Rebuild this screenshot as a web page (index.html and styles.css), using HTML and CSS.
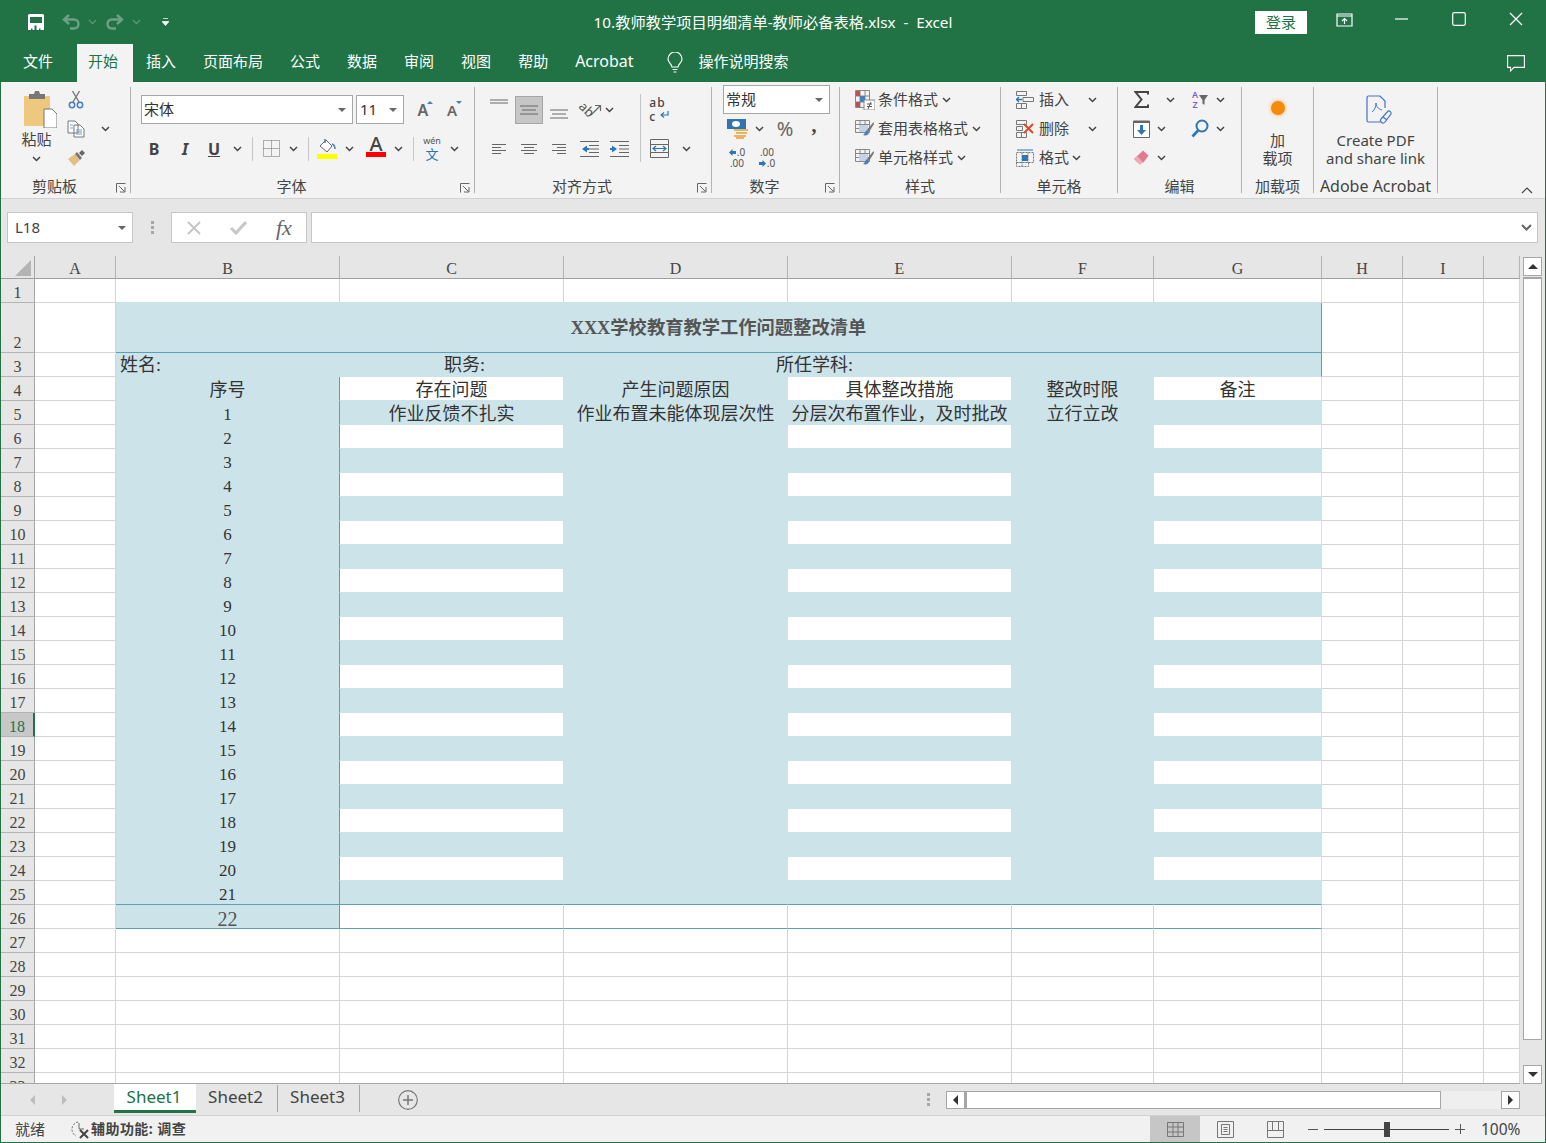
FILE: index.html
```html
<!DOCTYPE html>
<html lang="zh-CN">
<head>
  <meta charset="UTF-8">
  <title>10.教师教学项目明细清单-教师必备表格.xlsx - Excel</title>
  <link rel="stylesheet" href="styles.css">
</head>
<body>
<svg class="defs" width="0" height="0">
  <symbol id="chev" viewBox="0 0 9 6"><path d="M1 1l3.5 3.5L8 1" fill="none" stroke="#444" stroke-width="1.5"/></symbol>
  <symbol id="launch" viewBox="0 0 10 10"><path d="M.5 9.5V.5h9M3 3l5.5 5.5M4 9h5V4" fill="none" stroke="#666"/></symbol>
  <symbol id="a-top" viewBox="0 0 18 10"><path d="M0 1h18M0 4h18" stroke="#666"/></symbol>
  <symbol id="a-mid" viewBox="0 0 18 12"><path d="M0 2h18M2 6h14M0 10h18" stroke="#666"/></symbol>
  <symbol id="a-left" viewBox="0 0 16 12"><path d="M1 1.500h14M1 4.500h9M1 7.500h14M1 10.500h9" stroke="#666"/></symbol>
  <symbol id="a-center" viewBox="0 0 16 12"><path d="M0 1.500h16M3 4.500h10M0 7.500h16M3 10.500h10" stroke="#666"/></symbol>
  <symbol id="a-right" viewBox="0 0 16 12"><path d="M1 1.500h14M6 4.500h9M1 7.500h14M6 10.500h9" stroke="#666"/></symbol>
  <symbol id="brush" viewBox="0 0 20 20"><path d="M.5 1.500h14v12H.5zM.5 5.500h14M.5 9.500h14M5 1.500v12M10 1.500v12" fill="none" stroke="#888"/><path d="M4 6h9v7H4z" fill="#c4d3e6"/><path d="M18.500 3L12 11l2 2 5-8z" fill="#777"/><path d="M12 11c-2 1-1 3-4 5 3 1 6 0 6-3z" fill="#4a7ebb"/></symbol>
</svg>

<div class="app">
  <header class="titlebar">
    <div class="qat">
      <svg class="save" width="16" height="16" viewBox="0 0 16 16"><path d="M0 1.500A1.500 1.500 0 0 1 1.500 0h13A1.500 1.500 0 0 1 16 1.500V16H0z" fill="#fff"/><path d="M2 3h12v6H2z" fill="#217346"/><path d="M6.500 11.500h2V16h-2z" fill="#217346"/><path d="M3 14.500h1.500V16H3zM11 14.500h1.500V16H11z" fill="#217346"/></svg>
      <svg class="undo" width="18" height="16" viewBox="0 0 18 16"><path d="M7 1L2 5.500 7 10M2 5.500h10c6 0 6 9 0 9H8" fill="none" stroke="#6f9f85" stroke-width="2.400"/></svg>
      <svg class="qchev" width="9" height="6" viewBox="0 0 9 6"><path d="M1 1l3.500 3.500L8 1" fill="none" stroke="#5f9479" stroke-width="1.300"/></svg>
      <svg class="redo" width="18" height="16" viewBox="0 0 18 16"><path d="M11 1l5 4.500-5 4.500M16 5.500H6c-6 0-6 9 0 9h4" fill="none" stroke="#6f9f85" stroke-width="2.400"/></svg>
      <svg class="qchev" width="9" height="6" viewBox="0 0 9 6"><path d="M1 1l3.500 3.500L8 1" fill="none" stroke="#5f9479" stroke-width="1.300"/></svg>
      <svg class="custom" width="7" height="8" viewBox="0 0 7 8"><path d="M1 .5h5M0 3.500h7L3.500 7.500z" fill="#fff" stroke="#fff" stroke-width=".7"/></svg>
    </div>
    <div class="doc-title">10.教师教学项目明细清单-教师必备表格.xlsx&nbsp; -&nbsp; Excel</div>
    <div class="win-ctrl">
      <span class="login">登录</span>
      <svg class="display" width="17" height="14" viewBox="0 0 17 14"><path d="M1 1h15v12H1zM1 3h15" fill="none" stroke="#fff" stroke-width="1.200"/><path d="M8.500 11V6M6 8l2.500-2.500L11 8" fill="none" stroke="#fff" stroke-width="1.200"/></svg>
      <svg class="min" width="13" height="2" viewBox="0 0 13 2"><path d="M0 1h13" stroke="#fff" stroke-width="1.200"/></svg>
      <svg class="max" width="14" height="14" viewBox="0 0 14 14"><rect x=".7" y=".7" width="12.600" height="12.600" rx="1.500" fill="none" stroke="#fff" stroke-width="1.200"/></svg>
      <svg class="close" width="14" height="14" viewBox="0 0 14 14"><path d="M1 1l12 12M13 1L1 13" stroke="#fff" stroke-width="1.300"/></svg>
    </div>
  </header>

  <nav class="tabs">
    <span class="tab tab-file">文件</span>
    <span class="tab active">开始</span>
    <span class="tab">插入</span>
    <span class="tab">页面布局</span>
    <span class="tab">公式</span>
    <span class="tab">数据</span>
    <span class="tab">审阅</span>
    <span class="tab">视图</span>
    <span class="tab">帮助</span>
    <span class="tab tab-acro">Acrobat</span>
    <svg class="bulb" width="16" height="22" viewBox="0 0 16 22"><path d="M5 15c0-3-4-4-4-8a7 7 0 0 1 14 0c0 4-4 5-4 8zM5.500 17.500h5M6.500 20h3" fill="none" stroke="#fff" stroke-width="1.200"/></svg>
    <span class="search-text">操作说明搜索</span>
    <svg class="comment" width="18" height="17" viewBox="0 0 18 17"><path d="M.6.600h16.800v11.800H7l-3.500 3.500v-3.500H.6z" fill="none" stroke="#fff" stroke-width="1.100"/></svg>
  </nav>

  <section class="ribbon">
    <div class="group g-clip">
      <div class="body clip-body">
        <div class="paste">
          <svg class="paste-ic" width="34" height="37" viewBox="0 0 34 37"><path d="M1 5h26v30H1z" fill="#edc87e"/><path d="M6 3h5l1-3h4l1 3h5v5H6z" fill="#777"/><path d="M21 18h8l5 5v14H21z" fill="#fff" stroke="#777"/></svg>
          <span class="big-label">粘贴</span>
          <svg width="9" height="6"><use href="#chev"/></svg>
        </div>
        <div class="clip-tools">
          <div class="row">
            <span class="b w28"><svg width="16" height="19" viewBox="0 0 16 19"><path d="M11.500 1L5 12M4.500 1L11 12" stroke="#777" stroke-width="1.400"/><circle cx="4" cy="15" r="2.700" fill="none" stroke="#4a7ebb" stroke-width="1.500"/><circle cx="12" cy="15" r="2.700" fill="none" stroke="#4a7ebb" stroke-width="1.500"/></svg></span>
          </div>
          <div class="row">
            <span class="b w28"><svg width="18" height="18" viewBox="0 0 18 18"><path d="M1 1h7l3 3v9H1zM7 5h6l4 4v8H7z" fill="#fff" stroke="#777"/><path d="M9 10h6M9 12h6M9 14h6M3 5h3M3 8h3" stroke="#7a9cc6"/></svg></span>
            <span class="b w30"><svg width="9" height="6"><use href="#chev"/></svg></span>
          </div>
          <div class="row">
            <span class="b w28"><svg width="18" height="16" viewBox="0 0 18 16"><path d="M1 9l7-5 5 6-6 6z" fill="#e3bf85"/><path d="M8 4l5 6 2-2-5-6z" fill="#777"/><path d="M12 3l3-3 3 3-3 3z" fill="#666"/></svg></span>
          </div>
        </div>
      </div>
      <div class="label has-launch">剪贴板<svg class="launch" width="10" height="10"><use href="#launch"/></svg></div>
    </div>

    <div class="group g-font">
      <div class="body two-rows">
        <div class="row">
          <span class="select font-name"><span>宋体</span><i class="tri"></i></span>
          <span class="select font-size"><span>11</span><i class="tri"></i></span>
          <span class="b w38"><span class="grow">A<i class="up"></i></span></span>
          <span class="b w20"><span class="grow shrink">A<i class="up down"></i></span></span>
        </div>
        <div class="row">
          <span class="b w28 fb">B</span>
          <span class="b w34 fi">I</span>
          <span class="b w24 fu">U</span>
          <span class="b w22"><svg width="9" height="6"><use href="#chev"/></svg></span>
          <span class="b w8"><i class="vsep"></i></span>
          <span class="b w30"><svg width="17" height="17" viewBox="0 0 17 17"><path d="M.5.500h16v16H.5zM8.500.500v16M.5 8.500h16" fill="none" stroke="#666" stroke-dasharray="1 1"/></svg></span>
          <span class="b w14"><svg width="9" height="6"><use href="#chev"/></svg></span>
          <span class="b w16"><i class="vsep"></i></span>
          <span class="b w22"><svg width="20" height="21" viewBox="0 0 20 21"><path d="M3 8l6-6 6 6-5 6z" fill="#fff" stroke="#666"/><path d="M8 5V1M15 6c3 1 3 3 3 5" fill="none" stroke="#4a7ebb" stroke-width="1.500"/><path d="M0 16h20v5H0z" fill="#ffff00"/></svg></span>
          <span class="b w22"><svg width="9" height="6"><use href="#chev"/></svg></span>
          <span class="b w32 font-color">A</span>
          <span class="b w12"><svg width="9" height="6"><use href="#chev"/></svg></span>
          <span class="b w18"><i class="vsep"></i></span>
          <span class="b w20 wen"><small>wén</small><em>文</em></span>
          <span class="b w24"><svg width="9" height="6"><use href="#chev"/></svg></span>
        </div>
      </div>
      <div class="label has-launch">字体<svg class="launch" width="10" height="10"><use href="#launch"/></svg></div>
    </div>

    <div class="group g-align">
      <div class="body align-body">
        <div class="two-rows align-left">
          <div class="row">
            <span class="b w30"><svg class="up-6" width="18" height="10"><use href="#a-top"/></svg></span>
            <span class="b w30"><span class="pressed"><svg width="18" height="12"><use href="#a-mid"/></svg></span></span>
            <span class="b w30"><svg class="down-4" width="18" height="12"><use href="#a-mid"/></svg></span>
            <span class="b w30 orient-box"><span class="orient">ab</span><svg width="12" height="12" viewBox="0 0 12 12"><path d="M1 11L10 2M5 1.500h5.500V7" fill="none" stroke="#666" stroke-width="1.200"/></svg></span>
            <span class="b w10"><svg width="9" height="6"><use href="#chev"/></svg></span>
          </div>
          <div class="row">
            <span class="b w30"><svg width="16" height="12"><use href="#a-left"/></svg></span>
            <span class="b w30"><svg width="16" height="12"><use href="#a-center"/></svg></span>
            <span class="b w30"><svg width="16" height="12"><use href="#a-right"/></svg></span>
            <span class="b w30"><svg width="19" height="16" viewBox="0 0 19 16"><path d="M0 .5h19M9 4.500h10M9 8h10M9 11.500h10M0 15.500h19" stroke="#666"/><path d="M7 4.500L2 8l5 3.500zM7 7h-0" fill="#2f75b5"/><path d="M5 7h4v2H5z" fill="#2f75b5"/></svg></span>
            <span class="b w30"><svg width="19" height="16" viewBox="0 0 19 16"><path d="M0 .5h19M9 4.500h10M9 8h10M9 11.500h10M0 15.500h19" stroke="#666"/><path d="M2 4.500L7 8l-5 3.500z" fill="#2f75b5"/><path d="M0 7h3v2H0z" fill="#2f75b5"/></svg></span>
          </div>
        </div>
        <i class="vsep tall"></i>
        <div class="two-rows align-right">
          <div class="row">
            <span class="b w36 wrap-ic"><span>ab<br>c</span><svg width="9" height="8" viewBox="0 0 9 8"><path d="M8 0v4H2M4 1.500L1 4l3 2.500" fill="none" stroke="#2f75b5" stroke-width="1.200"/></svg></span>
          </div>
          <div class="row">
            <span class="b w36"><svg width="19" height="19" viewBox="0 0 19 19"><path d="M.5.500h18v18H.5zM.5 5.500h18M.5 13.500h18" fill="none" stroke="#666"/><path d="M3 9.500h13M6 7L3 9.500 6 12M13 7l3 2.500L13 12" fill="none" stroke="#2f75b5" stroke-width="1.200"/></svg></span>
            <span class="b w18"><svg width="9" height="6"><use href="#chev"/></svg></span>
          </div>
        </div>
      </div>
      <div class="label has-launch">对齐方式<svg class="launch" width="10" height="10"><use href="#launch"/></svg></div>
    </div>

    <div class="group g-num">
      <div class="body">
        <div class="row"><span class="select num-format"><span>常规</span><i class="tri"></i></span></div>
        <div class="row">
          <span class="b w30"><svg width="21" height="20" viewBox="0 0 21 20"><path d="M0 0h19v10H0z" fill="#2f75b5"/><ellipse cx="9" cy="5" rx="4" ry="3" fill="#fff"/><path d="M7 10h14v2H7zM9 13h11v2H9zM7 16h12v2H7zM9 18h8v2H9z" fill="#eab560"/></svg></span>
          <span class="b w14"><svg width="9" height="6"><use href="#chev"/></svg></span>
          <span class="b w38 percent">%</span>
          <span class="b w20 comma">,</span>
        </div>
        <div class="row">
          <span class="b w30 dec"><span><svg width="7" height="7" viewBox="0 0 7 7"><path d="M3.500 0L0 3.500 3.500 7V5H7V2H3.500z" fill="#2f75b5"/></svg>.0<br>.00</span></span>
          <span class="b w30 dec"><span>.00<br><svg width="7" height="7" viewBox="0 0 7 7"><path d="M3.500 0L7 3.500 3.500 7V5H0V2h3.500z" fill="#2f75b5"/></svg>.0</span></span>
        </div>
      </div>
      <div class="label has-launch">数字<svg class="launch" width="10" height="10"><use href="#launch"/></svg></div>
    </div>

    <div class="group g-styles">
      <div class="body">
        <div class="row item">
          <svg width="20" height="20" viewBox="0 0 20 20"><path d="M.5.500h14v17H.5zM.5 6h14M.5 12h14M5 .5v17M10 .5v17" fill="none" stroke="#888"/><path d="M1 1h4v5H1z" fill="#c0504d"/><path d="M5 6h5v6H5z" fill="#4a7ebb"/><path d="M1 12h4v5H1z" fill="#c0504d"/><path d="M9 10h11v10H9z" fill="#fff" stroke="#888"/><path d="M12 14h5M12 16.500h5M16 12l-3 7" stroke="#555"/></svg>
          <span class="item-text">条件格式</span><svg class="after" width="9" height="6"><use href="#chev"/></svg>
        </div>
        <div class="row item">
          <svg width="20" height="20"><use href="#brush"/></svg>
          <span class="item-text">套用表格格式</span><svg class="after" width="9" height="6"><use href="#chev"/></svg>
        </div>
        <div class="row item">
          <svg width="20" height="20"><use href="#brush"/></svg>
          <span class="item-text">单元格样式</span><svg class="after" width="9" height="6"><use href="#chev"/></svg>
        </div>
      </div>
      <div class="label">样式</div>
    </div>

    <div class="group g-cells">
      <div class="body">
        <div class="row item">
          <svg width="18" height="18" viewBox="0 0 18 18"><path d="M.5.500h10v4H.5zM.5 12.500h10v5H.5zM5.500 12.500v5M7 6.500h10.500v4H7z" fill="none" stroke="#777"/><path d="M6 8.500H1M3 6L.5 8.500 3 11" fill="none" stroke="#2f75b5" stroke-width="1.300"/></svg>
          <span class="item-text">插入</span><svg class="after wide" width="9" height="6"><use href="#chev"/></svg>
        </div>
        <div class="row item">
          <svg width="18" height="18" viewBox="0 0 18 18"><path d="M.5.500h10v4H.5zM.5 12.500h10v5H.5zM5.500 12.500v5M.5 6.500h6v4H.5z" fill="none" stroke="#777"/><path d="M8 4l9 9M17 4l-9 9" stroke="#d9482b" stroke-width="2"/></svg>
          <span class="item-text">删除</span><svg class="after wide" width="9" height="6"><use href="#chev"/></svg>
        </div>
        <div class="row item">
          <svg width="18" height="18" viewBox="0 0 18 18"><path d="M.5 3.500h17v10H.5zM.5 13.500h12v4H.5zM6 3.500v14M12 3.500v10" fill="none" stroke="#777" stroke-dasharray="2 1"/><path d="M6 6h6v6H6z" fill="#2f75b5"/><path d="M1 1h16" stroke="#2f75b5"/></svg>
          <span class="item-text">格式</span><svg class="after" width="9" height="6"><use href="#chev"/></svg>
        </div>
      </div>
      <div class="label">单元格</div>
    </div>

    <div class="group g-edit">
      <div class="body">
        <div class="row">
          <span class="b w30"><svg width="15" height="17" viewBox="0 0 15 17"><path d="M14 3.500V1H1.500l6 7.500-6 7.500H14v-2.500" fill="none" stroke="#444" stroke-width="2"/></svg></span>
          <span class="b w28"><svg width="9" height="6"><use href="#chev"/></svg></span>
          <span class="b w32 sort"><span>A<br>Z</span><svg width="9" height="10" viewBox="0 0 9 10"><path d="M0 0h9L5.500 5v5l-2-1.500V5z" fill="#666"/></svg></span>
          <span class="b w8"><svg width="9" height="6"><use href="#chev"/></svg></span>
        </div>
        <div class="row">
          <span class="b w30"><svg width="17" height="18" viewBox="0 0 17 18"><path d="M.5 1h16v16.500H.5z" fill="#fff" stroke="#666"/><path d="M.5 1h16v2H.5z" fill="#666"/><path d="M7 5h3v5h3l-4.500 5L4 10h3z" fill="#2f75b5"/></svg></span>
          <span class="b w10"><svg width="9" height="6"><use href="#chev"/></svg></span>
          <span class="b w18"></span>
          <span class="b w32"><svg width="18" height="19" viewBox="0 0 18 19"><circle cx="11" cy="7" r="5.500" fill="none" stroke="#2f75b5" stroke-width="2"/><path d="M7 11.500L1.500 17.500" stroke="#2f75b5" stroke-width="2.600"/></svg></span>
          <span class="b w8"><svg width="9" height="6"><use href="#chev"/></svg></span>
        </div>
        <div class="row">
          <span class="b w30"><svg width="16" height="16" viewBox="0 0 16 16"><path d="M10 .5l5.500 5-5 7-6 0L1 9z" fill="#e2798d"/><path d="M1 9l6 6 3-3-6-6z" fill="#eeaab7"/></svg></span>
          <span class="b w10"><svg width="9" height="6"><use href="#chev"/></svg></span>
        </div>
      </div>
      <div class="label">编辑</div>
    </div>

    <div class="group g-addin">
      <div class="body stack">
        <span class="stack-ic"><i class="dot"></i></span>
        <span>加</span>
        <span>载项</span>
      </div>
      <div class="label">加载项</div>
    </div>

    <div class="group g-acro">
      <div class="body stack">
        <span class="stack-ic"><svg width="26" height="30" viewBox="0 0 26 30"><path d="M14 27H2.500A1.500 1.500 0 0 1 1 25.500v-23A1.500 1.500 0 0 1 2.500 1H14l5 5v7" fill="none" stroke="#4472c4" stroke-width="1.200"/><path d="M6 17c3-2 4-6 4-9 0 3 2 6 6 7" fill="none" stroke="#4472c4"/><path d="M15 24l7-8a2.500 2.500 0 0 1 3 3l-6 8a2.500 2.500 0 0 1-4-3zM17 22l4 3" fill="none" stroke="#4472c4" stroke-width="1.200"/></svg></span>
        <span>Create PDF</span>
        <span>and share link</span>
      </div>
      <div class="label acro-label">Adobe Acrobat</div>
    </div>

    <svg class="collapse" width="12" height="7" viewBox="0 0 12 7"><path d="M1 6l5-5 5 5" fill="none" stroke="#444" stroke-width="1.200"/></svg>
  </section>

  <section class="formula">
    <div class="name-box"><span>L18</span><i class="tri"></i></div>
    <div class="grip"><i></i><i></i><i></i></div>
    <div class="fx-box">
      <svg width="14" height="14" viewBox="0 0 14 14"><path d="M1 1l12 12M13 1L1 13" stroke="#c6c6c6" stroke-width="2"/></svg>
      <svg width="17" height="14" viewBox="0 0 17 14"><path d="M1 7l5 5L16 1" fill="none" stroke="#c6c6c6" stroke-width="3"/></svg>
      <span class="fx">fx</span>
    </div>
    <div class="formula-input"><svg width="11" height="7" viewBox="0 0 11 7"><path d="M1 1l4.500 4.500L10 1" fill="none" stroke="#666" stroke-width="2"/></svg></div>
  </section>

  <section class="sheet-area">
    <div class="grid-wrap">
      <table class="grid">
        <colgroup><col class="c-head"><col class="c-a"><col class="c-wide"><col class="c-wide"><col class="c-wide"><col class="c-wide"><col class="c-f"><col class="c-g"><col class="c-a"><col class="c-a"><col class="c-j"></colgroup>
        <tr class="letters"><th class="corner"><svg width="16" height="16" viewBox="0 0 16 16"><path d="M16 0v16H0z" fill="#b4b4b4"/></svg></th><th>A</th><th>B</th><th>C</th><th>D</th><th>E</th><th>F</th><th>G</th><th>H</th><th>I</th><th></th></tr>
        <tr class="r1"><th>1</th><td></td><td></td><td></td><td></td><td></td><td></td><td></td><td></td><td></td><td></td></tr>
        <tr class="r2"><th>2</th><td></td><td colspan="6" class="blue sheet-title">XXX学校教育教学工作问题整改清单</td><td></td><td></td><td></td></tr>
        <tr class="r3"><th>3</th><td></td><td colspan="6" class="blue info"><span class="info-name">姓名:</span><span class="info-job">职务:</span><span>所任学科:</span></td><td></td><td></td><td></td></tr>
        <tr class="r4"><th>4</th><td></td><td class="blue edge">序号</td><td class="band">存在问题</td><td class="blue">产生问题原因</td><td class="band">具体整改措施</td><td class="blue">整改时限</td><td class="band">备注</td><td></td><td></td><td></td></tr>
        <tr><th>5</th><td></td><td class="blue edge">1</td><td class="blue">作业反馈不扎实</td><td class="blue">作业布置未能体现层次性</td><td class="blue">分层次布置作业&#xFF0C;及时批改</td><td class="blue">立行立改</td><td class="blue"></td><td></td><td></td><td></td></tr>
        <tr><th>6</th><td></td><td class="blue edge">2</td><td class="band"></td><td class="blue"></td><td class="band"></td><td class="blue"></td><td class="band"></td><td></td><td></td><td></td></tr>
        <tr><th>7</th><td></td><td class="blue edge">3</td><td class="blue"></td><td class="blue"></td><td class="blue"></td><td class="blue"></td><td class="blue"></td><td></td><td></td><td></td></tr>
        <tr><th>8</th><td></td><td class="blue edge">4</td><td class="band"></td><td class="blue"></td><td class="band"></td><td class="blue"></td><td class="band"></td><td></td><td></td><td></td></tr>
        <tr><th>9</th><td></td><td class="blue edge">5</td><td class="blue"></td><td class="blue"></td><td class="blue"></td><td class="blue"></td><td class="blue"></td><td></td><td></td><td></td></tr>
        <tr><th>10</th><td></td><td class="blue edge">6</td><td class="band"></td><td class="blue"></td><td class="band"></td><td class="blue"></td><td class="band"></td><td></td><td></td><td></td></tr>
        <tr><th>11</th><td></td><td class="blue edge">7</td><td class="blue"></td><td class="blue"></td><td class="blue"></td><td class="blue"></td><td class="blue"></td><td></td><td></td><td></td></tr>
        <tr><th>12</th><td></td><td class="blue edge">8</td><td class="band"></td><td class="blue"></td><td class="band"></td><td class="blue"></td><td class="band"></td><td></td><td></td><td></td></tr>
        <tr><th>13</th><td></td><td class="blue edge">9</td><td class="blue"></td><td class="blue"></td><td class="blue"></td><td class="blue"></td><td class="blue"></td><td></td><td></td><td></td></tr>
        <tr><th>14</th><td></td><td class="blue edge">10</td><td class="band"></td><td class="blue"></td><td class="band"></td><td class="blue"></td><td class="band"></td><td></td><td></td><td></td></tr>
        <tr><th>15</th><td></td><td class="blue edge">11</td><td class="blue"></td><td class="blue"></td><td class="blue"></td><td class="blue"></td><td class="blue"></td><td></td><td></td><td></td></tr>
        <tr><th>16</th><td></td><td class="blue edge">12</td><td class="band"></td><td class="blue"></td><td class="band"></td><td class="blue"></td><td class="band"></td><td></td><td></td><td></td></tr>
        <tr><th>17</th><td></td><td class="blue edge">13</td><td class="blue"></td><td class="blue"></td><td class="blue"></td><td class="blue"></td><td class="blue"></td><td></td><td></td><td></td></tr>
        <tr><th class="sel">18</th><td></td><td class="blue edge">14</td><td class="band"></td><td class="blue"></td><td class="band"></td><td class="blue"></td><td class="band"></td><td></td><td></td><td></td></tr>
        <tr><th>19</th><td></td><td class="blue edge">15</td><td class="blue"></td><td class="blue"></td><td class="blue"></td><td class="blue"></td><td class="blue"></td><td></td><td></td><td></td></tr>
        <tr><th>20</th><td></td><td class="blue edge">16</td><td class="band"></td><td class="blue"></td><td class="band"></td><td class="blue"></td><td class="band"></td><td></td><td></td><td></td></tr>
        <tr><th>21</th><td></td><td class="blue edge">17</td><td class="blue"></td><td class="blue"></td><td class="blue"></td><td class="blue"></td><td class="blue"></td><td></td><td></td><td></td></tr>
        <tr><th>22</th><td></td><td class="blue edge">18</td><td class="band"></td><td class="blue"></td><td class="band"></td><td class="blue"></td><td class="band"></td><td></td><td></td><td></td></tr>
        <tr><th>23</th><td></td><td class="blue edge">19</td><td class="blue"></td><td class="blue"></td><td class="blue"></td><td class="blue"></td><td class="blue"></td><td></td><td></td><td></td></tr>
        <tr><th>24</th><td></td><td class="blue edge">20</td><td class="band"></td><td class="blue"></td><td class="band"></td><td class="blue"></td><td class="band"></td><td></td><td></td><td></td></tr>
        <tr class="line"><th>25</th><td></td><td class="blue edge">21</td><td class="blue"></td><td class="blue"></td><td class="blue"></td><td class="blue"></td><td class="blue"></td><td></td><td></td><td></td></tr>
        <tr class="line"><th>26</th><td></td><td class="blue edge large">22</td><td></td><td></td><td></td><td></td><td></td><td></td><td></td><td></td></tr>
        <tr><th>27</th><td></td><td></td><td></td><td></td><td></td><td></td><td></td><td></td><td></td><td></td></tr>
        <tr><th>28</th><td></td><td></td><td></td><td></td><td></td><td></td><td></td><td></td><td></td><td></td></tr>
        <tr><th>29</th><td></td><td></td><td></td><td></td><td></td><td></td><td></td><td></td><td></td><td></td></tr>
        <tr><th>30</th><td></td><td></td><td></td><td></td><td></td><td></td><td></td><td></td><td></td><td></td></tr>
        <tr><th>31</th><td></td><td></td><td></td><td></td><td></td><td></td><td></td><td></td><td></td><td></td></tr>
        <tr><th>32</th><td></td><td></td><td></td><td></td><td></td><td></td><td></td><td></td><td></td><td></td></tr>
        <tr><th>33</th><td></td><td></td><td></td><td></td><td></td><td></td><td></td><td></td><td></td><td></td></tr>
      </table>
    </div>
    <div class="vscroll">
      <span class="sb-btn"><i class="arr-up"></i></span>
      <span class="sb-thumb"></span>
      <span class="sb-btn sb-down"><i class="arr-down"></i></span>
    </div>
  </section>

  <section class="sheetbar">
    <div class="sheet-nav"><i class="nav-l"></i><i class="nav-r"></i></div>
    <span class="sheet-tab on">Sheet1</span>
    <span class="sheet-tab">Sheet2</span>
    <span class="sheet-tab">Sheet3</span>
    <svg class="add-sheet" width="20" height="20" viewBox="0 0 20 20"><circle cx="10" cy="10" r="9.300" fill="none" stroke="#777" stroke-width="1.200"/><path d="M10 5v10M5 10h10" stroke="#777" stroke-width="1.500"/></svg>
    <div class="grip small"><i></i><i></i><i></i></div>
    <div class="hscroll">
      <span class="hs-btn"><i class="arr-left"></i></span>
      <span class="hs-thumb"></span>
      <span class="hs-track"></span>
      <span class="hs-btn"><i class="arr-right"></i></span>
    </div>
  </section>

  <footer class="status">
    <span class="ready">就绪</span>
    <svg class="acc-ic" width="21" height="19" viewBox="0 0 21 19"><path d="M9 2a7.500 7.500 0 0 0-2 14" fill="none" stroke="#666" stroke-dasharray="2 1.500"/><path d="M10 3v6h5" fill="none" stroke="#666"/><path d="M11 10l8 8M19 10l-8 8" stroke="#444" stroke-width="2"/></svg>
    <span class="acc">辅助功能: 调查</span>
    <div class="status-right">
      <span class="view on"><svg width="17" height="15" viewBox="0 0 17 15"><path d="M.5.500h16v14H.5zM.5 5h16M.5 10h16M6 .5v14M11 .5v14" fill="none" stroke="#777"/></svg></span>
      <span class="view"><svg width="17" height="17" viewBox="0 0 17 17"><path d="M.5.500h16v16H.5zM4.500 3.500h8v10h-8zM6.500 6.500h4M6.500 8.500h4M6.500 10.500h4" fill="none" stroke="#777"/></svg></span>
      <span class="view"><svg width="17" height="17" viewBox="0 0 17 17"><path d="M.5.500h16v16H.5zM5.500.500v9h6v-9M.5 9.500h16" fill="none" stroke="#777"/></svg></span>
      <div class="zoom">
        <span class="z-minus"></span>
        <span class="z-track"><i class="z-thumb"></i></span>
        <span class="z-plus"></span>
      </div>
      <span class="pct">100%</span>
    </div>
  </footer>
</div>
</body>
</html>
```

FILE: styles.css
```css
* { box-sizing: border-box; }
html, body { margin: 0; height: 100%; overflow: hidden; }
body { font-family: "Noto Sans", "Noto Sans CJK SC", sans-serif; font-size: 15px; color: #444; line-height: 18px; }
i, em { font-style: normal; }
svg { display: block; flex: none; }
.defs { position: absolute; }
.app { height: 1143px; display: flex; flex-direction: column; border: 1px solid #217346; border-top: 0; background: #e6e6e6; }

/* title bar */
.titlebar { height: 44px; background: #217346; display: grid; grid-template-columns: 1fr auto 1fr; align-items: center; color: #fff; }
.qat { display: flex; align-items: center; padding-left: 27px; }
.undo { margin-left: 18px; }
.qat .qchev { margin: 0 0 0 8px; }
.redo { margin-left: 9px; }
.custom { margin-left: 21px; }
.doc-title { font-size: 15.25px; white-space: nowrap; }
.win-ctrl { display: flex; align-items: center; justify-content: flex-end; }
.login { width: 52px; height: 23px; background: #fff; color: #217346; text-align: center; line-height: 23px; }
.display { margin: -4px 0 0 29px; }
.min { margin: -6px 0 0 42px; }
.max { margin: -6px 0 0 44px; }
.close { margin: -6px 22px 0 43px; }

/* tabs */
.tabs { height: 38px; background: #217346; display: flex; align-items: stretch; color: #fff; padding-left: 11px; gap: 2px; }
.tab { padding: 8px 14px 0 11px; white-space: nowrap; }
.tab-file { margin-right: 8px; }
.tab.active { background: #f3f3f3; color: #217346; padding-right: 15px; }
.tab-acro { font-size: 16px; }
.bulb { margin: 8px 0 0 17px; }
.search-text { margin: 8px 0 0 14px; }
.comment { margin: 11px 20px 0 auto; }

/* ribbon */
.ribbon { height: 117px; background: #f3f3f3; border-bottom: 1px solid #d2d2d2; display: flex; position: relative; }
.group { margin: 5px 0; height: 106px; border-right: 1px solid #b4b4b4; }
.g-clip { width: 130px; }
.g-font { width: 344px; }
.g-align { width: 237px; }
.g-num { width: 128px; }
.g-styles { width: 161px; }
.g-cells { width: 117px; }
.g-edit { width: 124px; }
.g-addin { width: 72px; }
.g-acro { width: 124px; }
.body { margin-top: -2px; height: 87px; }
.label { margin-top: 5px; height: 18px; text-align: center; position: relative; white-space: nowrap; }
.label.has-launch { padding-right: 22px; }
.acro-label { font-size: 16px; }
.launch { position: absolute; right: 4px; top: 6px; }
.row { display: flex; align-items: center; height: 29px; }
.b { display: flex; align-items: center; justify-content: center; height: 29px; flex: none; }
.w8 { width: 8px; } .w10 { width: 10px; } .w12 { width: 12px; } .w14 { width: 14px; }
.w16 { width: 16px; } .w18 { width: 18px; } .w20 { width: 20px; } .w22 { width: 22px; }
.w24 { width: 24px; } .w28 { width: 28px; } .w30 { width: 30px; } .w32 { width: 32px; }
.w34 { width: 34px; } .w36 { width: 36px; } .w38 { width: 38px; }
.vsep { display: block; width: 1px; height: 24px; background: #c6c6c6; }
.vsep.tall { height: 68px; margin-top: 9px; }

/* clipboard */
.clip-body { display: flex; padding-left: 10px; }
.paste { width: 51px; display: flex; flex-direction: column; align-items: center; }
.paste-ic { margin: 6px 0 0 6px; }
.big-label { margin: 2px 0 8px; }
.clip-tools { display: block; }

/* font */
.two-rows { padding: 10px 0 0 9px; }
.two-rows .row + .row { margin-top: 10px; }
.select { display: flex; align-items: center; justify-content: space-between; height: 29px; background: #fff; border: 1px solid #a6a6a6; padding: 0 6px 0 2px; color: #333; flex: none; }
.select span, .item-text, .name-box span { padding-bottom: 2px; }
.font-name { width: 212px; margin-left: 1px; }
.font-size { width: 48px; margin-left: 3px; padding-left: 3px; }
.tri { display: block; width: 0; height: 0; border: 4px solid transparent; border-top: 4px solid #666; border-bottom: 0; }
.grow { position: relative; font-size: 16px; color: #666; font-weight: 600; }
.shrink { font-size: 15px; }
.up { position: absolute; right: -5px; top: 0; width: 0; height: 0; border: 3px solid transparent; border-bottom: 3px solid #4a7ebb; border-top: 0; }
.down { border-top: 3px solid #4a7ebb; border-bottom: 0; }
.fb { font-weight: 700; font-size: 16px; }
.fi { font-style: italic; font-weight: 700; font-size: 16px; }
.fu { font-weight: 700; font-size: 16px; text-decoration: underline; }
.font-color { font-size: 20px; font-weight: 500; color: #444; display: block; text-align: center; line-height: 20px; }
.font-color::after { content: ""; display: block; width: 20px; height: 5px; margin: -2px auto 0; background: #f00; }
.wen { flex-direction: column; color: #2f75b5; }
.wen small { font-size: 9px; line-height: 12px; color: #555; }
.wen em { font-size: 13px; line-height: 15px; }

/* alignment */
.align-body { display: flex; align-items: flex-start; }
.align-left { width: 165px; flex: none; }
.align-right { padding-left: 0; }
.pressed { display: flex; align-items: center; justify-content: center; width: 28px; height: 28px; background: #c6c6c6; border: 1px solid #a6a6a6; }
.up-6 { margin-top: -12px; }
.down-4 { margin-top: 8px; }
.orient-box { justify-content: flex-start; padding-left: 5px; }
.orient { transform: rotate(45deg); font-size: 13px; line-height: 13px; display: block; color: #555; margin-right: -4px; }
.wrap-ic { font-size: 12px; line-height: 14px; letter-spacing: 1px; font-weight: 500; }
.wrap-ic svg { margin: 10px 0 0 -6px; }

/* number */
.g-num .body { padding-left: 10px; }
.num-format { width: 107px; margin-left: 1px; }
.percent { font-size: 20px; color: #666; }
.comma { font-size: 20px; font-weight: 700; font-family: "Liberation Serif", serif; padding-bottom: 8px; }
.dec { font-size: 10px; line-height: 11px; color: #555; text-align: center; }
.dec svg { display: inline-block; margin-right: 1px; }

/* styles + cells */
.g-styles .body, .g-cells .body { padding-left: 15px; }
.item { gap: 3px; }
.g-cells .item { gap: 5px; }
.after { margin-left: 1px; }
.g-cells .after { margin-left: -2px; }
.g-cells .after.wide { margin-left: 14px; }

/* editing */
.g-edit .body { padding-left: 8px; }
.sort { font-size: 9px; line-height: 10px; color: #7a5ec2; font-weight: 600; gap: 1px; text-align: center; }

/* add-ins */
.stack { display: flex; flex-direction: column; align-items: center; }
.stack-ic { height: 46px; display: flex; align-items: center; justify-content: center; }
.dot { width: 14px; height: 14px; border-radius: 50%; background: #f58a0b; box-shadow: 0 0 4px #f9b455; }
.g-acro .stack-ic { padding: 3px 0 0 6px; }
.collapse { position: absolute; right: 12px; bottom: 4px; }

/* formula bar */
.formula { height: 57px; padding: 13px 7px 0 6px; display: flex; align-items: flex-start; }
.name-box { width: 126px; height: 31px; background: #fff; border: 1px solid #c6c6c6; display: flex; align-items: center; justify-content: space-between; padding: 0 6px 0 7px; }
.grip { width: 38px; height: 31px; display: flex; flex-direction: column; align-items: center; justify-content: center; gap: 2px; }
.grip i { width: 3px; height: 3px; background: #a6a6a6; }
.fx-box { width: 136px; height: 31px; background: #fff; border: 1px solid #c6c6c6; display: flex; align-items: center; padding-left: 15px; gap: 29px; }
.fx { font-family: "Liberation Serif", serif; font-style: italic; font-size: 22px; color: #666; }
.formula-input { flex: 1; height: 31px; margin-left: 4px; background: #fff; border: 1px solid #c6c6c6; display: flex; align-items: center; justify-content: flex-end; padding-right: 5px; }

/* grid */
.sheet-area { flex: 1; min-height: 0; display: flex; }
.grid-wrap { width: 1519px; overflow: hidden; background: #fff; flex: none; border-bottom: 1px solid #a6a6a6; }
.grid { border-collapse: separate; border-spacing: 0; table-layout: fixed; width: 1519px; font-family: "Liberation Serif", "Noto Sans CJK SC", serif; font-size: 16px; color: #333; }
.c-head { width: 34px; } .c-a { width: 81px; } .c-wide { width: 224px; }
.c-f { width: 142px; } .c-g { width: 168px; } .c-j { width: 36px; }
.grid th, .grid td { height: 24px; padding: 0; line-height: 20px; text-align: center; vertical-align: bottom; font-weight: 400; white-space: nowrap; overflow: hidden; border-right: 1px solid #d4d4d4; border-bottom: 1px solid #d4d4d4; }
.grid td { font-size: 18px; }
.grid td.edge { font-size: 17px; line-height: 18px; }
.grid .r4 td.edge { font-size: 18px; line-height: 20px; }
.grid th { background: #e6e6e6; color: #444; border-right-color: #a6a6a6; border-bottom-color: #b4b4b4; font-size: 16px; line-height: 18px; }
.grid .letters th { height: 23px; border-bottom-color: #9f9f9f; border-right-color: #b4b4b4; font-size: 16px; line-height: 19px; }
.grid .letters .corner { border-right-color: #a6a6a6; }
.corner svg { margin: 0 2px 2px 14px; }
.grid th.sel { background: #c8c8c8; color: #217346; border-right: 2px solid #217346; }
.grid .blue { background: #cde3ea; border-color: #cde3ea; }
.grid .band { background: #fff; border-color: #cde3ea; }
.grid .edge { border-right-color: #5f9fb5; }
.grid td.large { font-size: 20px; color: #555; }
.grid .r1 td:nth-child(n+3):nth-child(-n+8) { border-bottom-color: #cde3ea; }
.grid .r2 th, .grid .r2 td { height: 50px; }
.grid td.sheet-title { vertical-align: middle; font-size: 18.3px; font-weight: 700; color: #555; border-bottom-color: #5f9fb5; border-right-color: #5f9fb5; }
.grid td.info { text-align: left; padding-left: 4px; line-height: 22px; border-right-color: #5f9fb5; border-bottom-color: #cde3ea; }
.info-name { display: inline-block; width: 324px; }
.info-job { display: inline-block; width: 332px; }
.grid .line td:nth-child(n+3):nth-child(-n+8) { border-bottom-color: #5f9fb5; }

/* vertical scrollbar */
.vscroll { flex: 1; padding: 1px 3px 0 3px; display: flex; flex-direction: column; background: #e6e6e6; }
.sb-btn { height: 19px; background: #fff; border: 1px solid #a6a6a6; display: flex; align-items: center; justify-content: center; flex: none; }
.sb-thumb { height: 763px; margin-top: 1px; background: #fff; border: 1px solid #a6a6a6; border-top-width: 2px; flex: none; }
.sb-down { margin-top: auto; }
.arr-up, .arr-down, .arr-left, .arr-right { display: block; width: 0; height: 0; border: 5px solid transparent; }
.arr-up { border-bottom-color: #333; border-top: 0; }
.arr-down { border-top-color: #333; border-bottom: 0; }
.arr-left { border-right-color: #333; border-left: 0; }
.arr-right { border-left-color: #333; border-right: 0; }

/* sheet tabs */
.sheetbar { height: 32px; flex: none; display: flex; align-items: flex-start; background: #e6e6e6; border-bottom: 1px solid #d2d2d2; }
.sheet-nav { width: 113px; height: 31px; display: flex; align-items: center; padding: 0 0 0 29px; gap: 27px; }
.nav-l, .nav-r { display: block; width: 0; height: 0; border: 5px solid transparent; }
.nav-l { border-right-color: #bdbdbd; border-left: 0; }
.nav-r { border-left-color: #bdbdbd; border-right: 0; }
.sheet-tab { height: 27px; width: 82px; text-align: center; font-size: 17px; line-height: 24px; padding-right: 2px; border-right: 1px solid #a6a6a6; margin-top: 1px; }
.sheet-tab.on { width: 82px; height: 29px; margin-top: 0; padding-top: 1px; background: #fff; color: #217346; border-right: 0; border-bottom: 3px solid #217346; }
.add-sheet { margin: 6px 0 0 38px; }
.grip.small { width: 6px; height: 31px; margin-left: 507px; }
.hscroll { display: flex; height: 18px; margin: 7px 0 0 15px; width: 574px; }
.hs-btn { width: 19px; height: 18px; background: #fff; border: 1px solid #a6a6a6; display: flex; align-items: center; justify-content: center; flex: none; }
.hs-thumb { width: 476px; background: #fff; border: 1px solid #a6a6a6; border-left-width: 2px; flex: none; }
.hs-track { flex: 1; background: #efefef; }

/* status bar */
.status { height: 26px; flex: none; background: #f1f1f1; display: flex; align-items: center; }
.ready { margin-left: 14px; }
.acc-ic { margin-left: 24px; }
.acc { font-size: 14px; font-weight: 700; margin-left: 1px; letter-spacing: .45px; }
.status-right { margin-left: auto; display: flex; align-items: center; height: 100%; }
.view { width: 50px; height: 100%; display: flex; align-items: center; justify-content: center; }
.view.on { background: #c6c6c6; }
.zoom { display: flex; align-items: center; margin-left: 8px; }
.z-minus { width: 10px; height: 1px; background: #555; }
.z-track { width: 125px; height: 1px; background: #444; margin: 0 6px; position: relative; }
.z-thumb { position: absolute; left: 60px; top: -7px; width: 6px; height: 15px; background: #444; }
.z-plus { width: 10px; height: 10px; background: linear-gradient(#555, #555) center / 10px 1px no-repeat, linear-gradient(#555, #555) center / 1px 10px no-repeat; }
.pct { width: 40px; margin: 0 24px 0 16px; white-space: nowrap; font-size: 15.5px; }
```
